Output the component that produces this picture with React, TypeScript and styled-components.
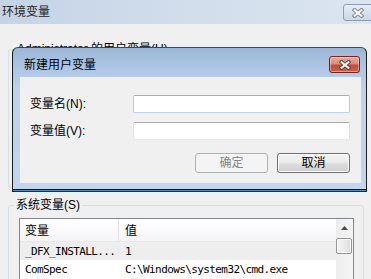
import React from "react";
import styled, { createGlobalStyle } from "styled-components";

const GlobalStyle = createGlobalStyle`
  html, body {
    margin: 0;
    padding: 0;
    background: #f0f0f0;
    overflow: hidden;
  }
  body {
    font-family: "Liberation Sans", "Noto Sans CJK SC", sans-serif;
    font-size: 12px;
    color: #000;
  }
  * { box-sizing: border-box; }
`;

const Window = styled.div`
  position: relative;
  width: 371px;
  height: 279px;
  overflow: hidden;
  background: #f0f0f0;
`;

const TitleBar = styled.div`
  height: 24px;
  display: flex;
  align-items: flex-start;
  justify-content: space-between;
  padding-left: 2px;
  background: linear-gradient(to right, #c4d4e6 0%, #d2deec 55%, #dbe5f0 100%);
`;

const TitleText = styled.span`
  margin-top: 5px;
  line-height: 14px;
  font-size: 12px;
  color: #222;
`;

const InactiveClose = styled.div`
  margin-top: 4px;
  margin-right: -3px;
  width: 31px;
  height: 17px;
  border: 1px solid #8e9db3;
  border-radius: 3px;
  background: linear-gradient(#e6edf5 0%, #d8e2ee 50%, #ccd8e7 100%);
  display: flex;
  align-items: center;
  justify-content: center;
  padding-right: 2px;
`;

const Content = styled.div`
  padding: 18px 7px 0 8px;
  display: flex;
  flex-direction: column;
  gap: 10px;
`;

const Group = styled.fieldset<{ $height: number }>`
  margin: 0;
  min-width: 0;
  height: ${(p) => p.$height}px;
  border: 1px solid #d5dfe5;
  border-radius: 3px;
  padding: 6px 9px 0 10px;
`;

const Legend = styled.legend<{ $shift: number }>`
  margin-left: ${(p) => p.$shift}px;
  padding: 0 2px;
  font-size: 12px;
  line-height: 14px;
  color: #000;
`;

const ListBox = styled.div`
  height: 80px;
  border: 1px solid #828790;
  background: #fff;
  display: flex;
`;

const Table = styled.div`
  flex: 1;
  display: flex;
  flex-direction: column;
`;

const HeaderRow = styled.div`
  height: 23px;
  display: grid;
  grid-template-columns: 99px 1fr;
  background: linear-gradient(#ffffff 0%, #fbfbfc 50%, #f3f4f6 100%);
  border-bottom: 1px solid #e5e7ea;
`;

const HeaderCell = styled.div<{ $divider?: boolean }>`
  display: flex;
  align-items: center;
  padding: 2px 0 0 ${(p) => (p.$divider ? 5 : 6)}px;
  border-right: ${(p) => (p.$divider ? "1px solid #e3e5e8" : "none")};
  font-size: 12px;
  line-height: 14px;
`;

const Row = styled.div<{ $selected?: boolean }>`
  height: 18px;
  display: grid;
  grid-template-columns: 100px 1fr;
  align-items: center;
  background: ${(p) => (p.$selected ? "#eeeeee" : "#ffffff")};
  font-family: "DejaVu Sans Mono", "Liberation Mono", monospace;
  font-size: 11px;
  letter-spacing: -0.6px;
  white-space: nowrap;
`;

const Cell = styled.span<{ $first?: boolean }>`
  padding-left: ${(p) => (p.$first ? 5 : 5)}px;
  overflow: hidden;
`;

const ScrollBar = styled.div`
  width: 17px;
  background: linear-gradient(to right, #ececec, #f5f5f5);
  display: flex;
  flex-direction: column;
  align-items: flex-start;
`;

const ArrowButton = styled.div`
  width: 16px;
  height: 17px;
  display: flex;
  align-items: center;
  justify-content: center;
`;

const Thumb = styled.div`
  margin-top: 2px;
  width: 16px;
  height: 16px;
  border: 1px solid #979797;
  border-radius: 2px;
  background: linear-gradient(to right, #f4f4f4 0%, #eaeaea 50%, #dcdcdc 100%);
  box-shadow: inset 0 0 0 1px #fbfbfb;
`;

const Dialog = styled.div`
  position: absolute;
  left: 12px;
  top: 47px;
  width: 355px;
  height: 145px;
  border: 1px solid #1c1c1c;
  border-top-color: #444;
  border-radius: 6px 6px 0 0;
  background: linear-gradient(#9bb6d6 0px, #adc6e3 20px, #bcd2eb 40px, #c2d7ee 100%);
  padding: 0 5px 0 7px;
  display: flex;
  flex-direction: column;
  box-shadow: inset 0 -1px 0 #1ea6d0, inset 0 -2px 0 #000;
`;

const DialogTitle = styled.div`
  height: 29px;
  padding: 5px 1px 0 4px;
  display: flex;
  align-items: center;
  justify-content: space-between;
  font-size: 12px;
  line-height: 14px;
`;

const RedClose = styled.div`
  width: 31px;
  height: 17px;
  margin-top: -1px;
  border: 1px solid #7a2318;
  border-radius: 3px;
  background: linear-gradient(#e7aa9f 0%, #d98c7d 45%, #c24b36 55%, #cf6047 100%);
  box-shadow: inset 0 0 0 1px rgba(255, 230, 225, 0.45);
  display: flex;
  align-items: center;
  justify-content: center;
`;

const Client = styled.div`
  height: 106px;
  width: 341px;
  background: #f0f0f0;
  padding: 18px 11px 0 10px;
  display: flex;
  flex-direction: column;
`;

const Form = styled.div`
  display: grid;
  grid-template-columns: 103px 217px;
  grid-auto-rows: 18px;
  row-gap: 9px;
  align-items: center;
`;

const Label = styled.label`
  font-size: 12px;
  line-height: 14px;
  white-space: nowrap;
`;

const TextBox = styled.div<{ $focused?: boolean }>`
  height: 18px;
  background: #fff;
  border: 1px solid;
  border-radius: 2px;
  border-color: ${(p) =>
    p.$focused
      ? "#86b2dc #a9cce9 #b8d3ec #a9cce9"
      : "#abadb3 #dbdfe6 #e3e9ef #e2e3ea"};
`;

const ButtonRow = styled.div`
  margin-top: 13px;
  display: flex;
  justify-content: flex-end;
  gap: 9px;
`;

const Button = styled.div<{ $disabled?: boolean }>`
  width: 73px;
  height: 20px;
  border: 1px solid ${(p) => (p.$disabled ? "#adb2b5" : "#707070")};
  border-radius: 3px;
  background: ${(p) =>
    p.$disabled
      ? "#f4f4f4"
      : "linear-gradient(#f2f2f2 0%, #ebebeb 45%, #dddddd 55%, #cfcfcf 100%)"};
  box-shadow: ${(p) => (p.$disabled ? "none" : "inset 0 0 0 1px #fafafa")};
  color: ${(p) => (p.$disabled ? "#838383" : "#000")};
  display: flex;
  align-items: center;
  justify-content: center;
  font-size: 12px;
  line-height: 14px;
`;

const CloseGlyph: React.FC<{ outline: string }> = ({ outline }) => (
  <svg width="12" height="10" viewBox="0 0 12 10">
    <path d="M1 0.8 L11 9.2 M11 0.8 L1 9.2" stroke={outline} strokeWidth="4" fill="none" />
    <path d="M1.8 1.5 L10.2 8.5 M10.2 1.5 L1.8 8.5" stroke="#ffffff" strokeWidth="2.2" fill="none" />
  </svg>
);

const UpArrow = () => (
  <svg width="7" height="4" viewBox="0 0 7 4">
    <path d="M0 4 L3.5 0 L7 4 Z" fill="#4a4a4a" />
  </svg>
);

const rows = [
  { name: "_DFX_INSTALL...", value: "1", selected: true },
  { name: "ComSpec", value: "C:\\Windows\\system32\\cmd.exe", selected: false },
];

export default function App() {
  return (
    <>
      <GlobalStyle />
      <Window>
        <TitleBar>
          <TitleText>环境变量</TitleText>
          <InactiveClose>
            <CloseGlyph outline="#7d8894" />
          </InactiveClose>
        </TitleBar>
        <Content>
          <Group $height={146}>
            <Legend $shift={-4}>Administrator 的用户变量(U)</Legend>
          </Group>
          <Group $height={90}>
            <Legend $shift={-5}>系统变量(S)</Legend>
            <ListBox>
              <Table>
                <HeaderRow>
                  <HeaderCell $divider>变量</HeaderCell>
                  <HeaderCell>值</HeaderCell>
                </HeaderRow>
                {rows.map((r) => (
                  <Row key={r.name} $selected={r.selected}>
                    <Cell $first>{r.name}</Cell>
                    <Cell>{r.value}</Cell>
                  </Row>
                ))}
              </Table>
              <ScrollBar>
                <ArrowButton>
                  <UpArrow />
                </ArrowButton>
                <Thumb />
              </ScrollBar>
            </ListBox>
          </Group>
        </Content>
        <Dialog>
          <DialogTitle>
            <span>新建用户变量</span>
            <RedClose>
              <CloseGlyph outline="#6b3a33" />
            </RedClose>
          </DialogTitle>
          <Client>
            <Form>
              <Label>变量名(N):</Label>
              <TextBox $focused />
              <Label>变量值(V):</Label>
              <TextBox />
            </Form>
            <ButtonRow>
              <Button $disabled>确定</Button>
              <Button>取消</Button>
            </ButtonRow>
          </Client>
        </Dialog>
      </Window>
    </>
  );
}
